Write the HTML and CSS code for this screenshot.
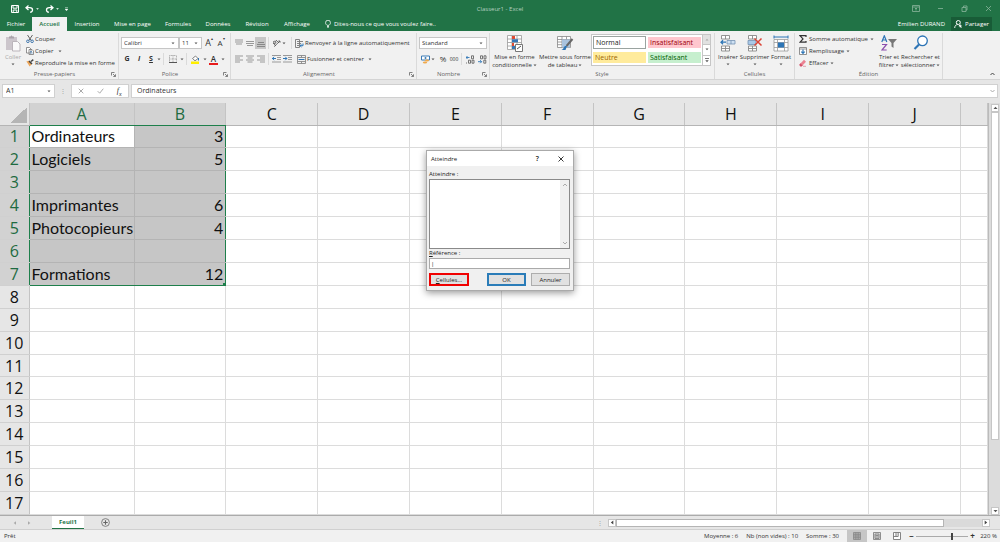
FILE: index.html
```html
<!DOCTYPE html>
<html lang="fr">
<head>
<meta charset="utf-8">
<title>Classeur1 - Excel</title>
<link rel="stylesheet" href="styles.css">
</head>
<body>
<svg class="defs" aria-hidden="true">
  <symbol id="down" viewBox="0 0 4 3"><path d="M0.5 0.5h3L2 2.3z" fill="#555"/></symbol>
  <symbol id="launch" viewBox="0 0 5 5"><path d="M.5 3.5v-3h3M2 2l2.3 2.3M4.5 2.3v2.2H2.3" fill="none" stroke="#666" stroke-width=".8"/></symbol>
</svg>

<header class="top">
  <div class="titlebar">
    <div class="quick">
      <button aria-label="Enregistrer"><svg width="8" height="8" viewBox="0 0 8 8"><path d="M.5.5h7v7h-7zM2 .5v2.7h4V.5M2.2 7.500V5h3.6v2.500" fill="none" stroke="#fff"/></svg></button>
      <button aria-label="Annuler la frappe"><svg width="9" height="8" viewBox="0 0 9 8"><path d="M3.500.5L1 2.700l2.500 2.200M1.200 2.700h3.600c3.600 0 3.600 4.500.2 4.500" fill="none" stroke="#fff" stroke-width="1.300"/></svg><svg width="3" height="2" viewBox="0 0 4 3"><path d="M0 .5h4L2 2.500z" fill="#fff"/></svg></button>
      <button aria-label="Répéter"><svg width="9" height="8" viewBox="0 0 9 8"><path d="M5.500.5L8 2.700 5.500 4.900M7.800 2.700H4.200c-3.600 0-3.600 4.500-.2 4.500" fill="none" stroke="#fff" stroke-width="1.300"/></svg><svg width="3" height="2" viewBox="0 0 4 3"><path d="M0 .5h4L2 2.500z" fill="#fff"/></svg></button>
      <button aria-label="Personnaliser"><svg width="3" height="4" viewBox="0 0 3 4"><path d="M0 .5h3M0 2h3L1.500 3.800z" fill="#fff" stroke="#fff" stroke-width=".4"/></svg></button>
    </div>
    <div class="doc-title">Classeur1 - Excel</div>
    <div class="window-buttons">
      <button aria-label="Options du ruban"><svg width="8" height="7" viewBox="0 0 8 7"><path d="M.5.5h7v6h-7zM.5 2h7M4 5.500V3M3 4l1-1 1 1" fill="none" stroke="#8ab59c" stroke-width=".8"/></svg></button>
      <button aria-label="Réduire"><svg width="7" height="7" viewBox="0 0 7 7"><path d="M1 3.500h5" stroke="#8ab59c" stroke-width=".8"/></svg></button>
      <button aria-label="Restaurer"><svg width="7" height="7" viewBox="0 0 7 7"><path d="M1 2.500h4v4H1zM2.500 2.500V1H6v4H5" fill="none" stroke="#8ab59c" stroke-width=".8"/></svg></button>
      <button aria-label="Fermer"><svg width="7" height="7" viewBox="0 0 7 7"><path d="M1 1l5 5M6 1L1 6" stroke="#8ab59c" stroke-width=".8"/></svg></button>
    </div>
  </div>
  <nav class="tabs">
    <button class="tab-file">Fichier</button>
    <button class="tab-active">Accueil</button>
    <button class="tab-insert">Insertion</button>
    <button class="tab-page">Mise en page</button>
    <button class="tab-formulas">Formules</button>
    <button class="tab-data">Données</button>
    <button class="tab-review">Révision</button>
    <button class="tab-view">Affichage</button>
    <button class="tell-me"><svg width="6" height="8" viewBox="0 0 6 8"><path d="M2 5.300C.5 4 .5 3 .6 2.600a2.400 2.400 0 0 1 4.800 0C5.500 3 5.500 4 4 5.300zM2 6.500h2M2.300 7.600h1.400" fill="none" stroke="#fff" stroke-width=".8"/></svg>Dites-nous ce que vous voulez faire..</button>
    <span class="user">Emilien DURAND</span>
    <button class="share"><svg width="8" height="8" viewBox="0 0 8 8"><circle cx="4.300" cy="2.500" r="2" fill="none" stroke="#fff"/><path d="M.7 8C.8 5.500 2 4.700 3.600 4.600M5 5l2.500 2.500M6.300 4.500v3M4.800 6h3" fill="none" stroke="#fff" stroke-width=".9"/></svg>Partager</button>
  </nav>
</header>

<section class="ribbon" aria-label="Ruban">
  <div class="group clipboard">
    <div class="content">
      <button class="big disabled"><svg width="16" height="17" viewBox="0 0 16 17"><path d="M1 2h11v13H1z" fill="#ccc6cc"/><path d="M4 3.500V1.500h1.500L6.500.3l1 1.200H9v2z" fill="#aaa3aa"/><path d="M7.500 6.500h5l2.500 2.500v7H7.500z" fill="#faf9fa" stroke="#bbb5bb"/></svg><span>Coller</span><svg class="car"><use href="#down"/></svg></button>
      <div class="stack">
        <button><svg width="8" height="8" viewBox="0 0 8 8"><path d="M1.500 0l3.700 5.500M6.500 0L2.800 5.500" stroke="#555" stroke-width=".9"/><circle cx="1.900" cy="6.300" r="1.300" fill="none" stroke="#3f76ad"/><circle cx="6.100" cy="6.300" r="1.300" fill="none" stroke="#3f76ad"/></svg>Couper</button>
        <button><svg width="8" height="8" viewBox="0 0 8 8"><path d="M.5.5h3l1.500 1.500v4H.5zM3 2.500h3l1.500 1.500v3.500H3z" fill="#fff" stroke="#777" stroke-width=".8"/><path d="M4 4.500h2M4 6h2.700" stroke="#4a83b8" stroke-width=".7"/></svg>Copier<svg class="car wide"><use href="#down"/></svg></button>
        <button><svg width="8" height="8" viewBox="0 0 8 8"><path d="M.3 2.500L3 1.800 6 5 3.500 7.600C2.500 5 1.500 4 .3 2.500z" fill="#eda65a"/><path d="M3 2l3 3M5 2.500L7.300.6" stroke="#444" stroke-width="1.500"/></svg>Reproduire la mise en forme</button>
      </div>
    </div>
    <div class="caption launched">Presse-papiers<svg class="launch"><use href="#launch"/></svg></div>
  </div>

  <div class="group font">
    <div class="content rows">
      <div class="row">
        <label class="combo font-name"><select aria-label="Police"><option>Calibri</option></select><svg class="car"><use href="#down"/></svg></label>
        <label class="combo font-size"><select aria-label="Taille"><option>11</option></select><svg class="car"><use href="#down"/></svg></label>
        <button class="tool12 grow" aria-label="Agrandir la police">A<sup>▴</sup></button>
        <button class="tool12 shrink" aria-label="Réduire la police">A<sup>▾</sup></button>
      </div>
      <div class="row">
        <button class="tool12"><b>G</b></button>
        <button class="tool12"><b><i>I</i></b></button>
        <button class="tool12"><b><u>S</u></b></button>
        <svg class="car"><use href="#down"/></svg><i class="sep"></i>
        <button class="tool8" aria-label="Bordures"><svg width="8" height="8" viewBox="0 0 8 8"><path d="M.5.5h7v7M.5.5v7M4 0v7M0 4h8" fill="none" stroke="#999" stroke-width=".7" stroke-dasharray="1 .5"/><path d="M0 7.500h8" stroke="#555"/></svg></button>
        <svg class="car"><use href="#down"/></svg><i class="sep"></i>
        <button class="tool8" aria-label="Remplissage de couleur"><svg width="9" height="9" viewBox="0 0 9 9"><path d="M1.500 3.500L4.500 1l2.500 2.500-3 2.300z" fill="#fff" stroke="#666" stroke-width=".8"/><path d="M7.500 3v2.500" stroke="#2d75b6"/><path d="M0 6.500h8v2.500H0z" fill="#ffee00"/></svg></button>
        <svg class="car"><use href="#down"/></svg>
        <button class="tool8 font-color" aria-label="Couleur de police">A</button>
        <svg class="car"><use href="#down"/></svg>
      </div>
    </div>
    <div class="caption launched">Police<svg class="launch"><use href="#launch"/></svg></div>
  </div>

  <div class="group align">
    <div class="content rows">
      <div class="row">
        <button class="tool12" aria-label="Haut"><svg width="8" height="8" viewBox="0 0 8 8"><path d="M0 1h8M0 3h8M1 5h6" stroke="#999"/></svg></button>
        <button class="tool12" aria-label="Milieu"><svg width="8" height="8" viewBox="0 0 8 8"><path d="M0 2.500h8M0 4.500h8M1 6.500h6" stroke="#999"/></svg></button>
        <button class="tool12 pressed" aria-label="Bas"><svg width="8" height="8" viewBox="0 0 8 8"><path d="M1 3.500h6M0 5.500h8M0 7.500h8" stroke="#888"/></svg></button>
        <i class="sep"></i>
        <button class="tool12" aria-label="Orientation"><svg width="9" height="8" viewBox="0 0 9 8"><path d="M1 4l3 3M1.500 2.500l2-.5.5 2-2 .5zM4 1l3 3M2 7.700L8 2M6.300 2H8v1.700" fill="none" stroke="#555" stroke-width=".8"/></svg></button>
        <svg class="car"><use href="#down"/></svg>
        <i class="sep space"></i>
        <button class="cmd"><svg width="9" height="9" viewBox="0 0 9 9"><path d="M.5.500h4v8h-4zM2 2.500h6M2 4.500h4M2 6.500h2" fill="none" stroke="#777" stroke-width=".9"/><path d="M8 4.500v2.200H5M6.500 5.300L5 6.700l1.500 1.300" fill="none" stroke="#2d75b6"/></svg>Renvoyer à la ligne automatiquement</button>
      </div>
      <div class="row">
        <button class="tool12" aria-label="Gauche"><svg width="8" height="8" viewBox="0 0 8 8"><path d="M0 1h8M0 3h5M0 5h8M0 7h5" stroke="#999"/></svg></button>
        <button class="tool12" aria-label="Centrer"><svg width="8" height="8" viewBox="0 0 8 8"><path d="M0 1h8M1.500 3h5M0 5h8M1.500 7h5" stroke="#999"/></svg></button>
        <button class="tool12" aria-label="Droite"><svg width="8" height="8" viewBox="0 0 8 8"><path d="M0 1h8M3 3h5M0 5h8M3 7h5" stroke="#999"/></svg></button>
        <i class="sep"></i>
        <button class="tool12" aria-label="Diminuer le retrait"><svg width="9" height="8" viewBox="0 0 9 8"><path d="M0 .5h9M5 2.500h4M5 4.500h4M0 7h9" stroke="#999"/><path d="M0 3.500h4M2 1.800L.5 3.500 2 5.200" fill="none" stroke="#2d75b6"/></svg></button>
        <button class="tool12" aria-label="Augmenter le retrait"><svg width="9" height="8" viewBox="0 0 9 8"><path d="M0 .5h9M5 2.500h4M5 4.500h4M0 7h9" stroke="#999"/><path d="M0 3.500h4M2.300 1.800L3.800 3.500 2.300 5.200" fill="none" stroke="#2d75b6"/></svg></button>
        <button class="cmd merge"><svg width="9" height="9" viewBox="0 0 9 9"><path d="M.5.500h8v8h-8zM.5 2.500h8M.5 6.500h8M4.500.5v2M4.500 6.500v2" fill="none" stroke="#888" stroke-width=".9"/><path d="M1.500 4.500h6" stroke="#2d75b6"/></svg>Fusionner et centrer<svg class="car wide"><use href="#down"/></svg></button>
      </div>
    </div>
    <div class="caption launched">Alignement<svg class="launch"><use href="#launch"/></svg></div>
  </div>

  <div class="group number">
    <div class="content rows">
      <div class="row">
        <label class="combo number-format"><select aria-label="Format de nombre"><option>Standard</option></select><svg class="car"><use href="#down"/></svg></label>
      </div>
      <div class="row">
        <button class="tool12" aria-label="Format comptable"><svg width="9" height="9" viewBox="0 0 9 9"><path d="M.5 1h8v4h-8z" fill="#fff" stroke="#3a7ab5"/><circle cx="4.500" cy="3" r="1" fill="#3a7ab5"/><ellipse cx="6" cy="5.500" rx="2" ry="1" fill="#f0a94b"/><ellipse cx="4" cy="7.500" rx="2.200" ry="1.100" fill="#f0a94b"/></svg></button>
        <svg class="car"><use href="#down"/></svg>
        <button class="tool12 pct">%</button>
        <button class="tool12 thousands">000</button>
        <i class="sep"></i>
        <button class="tool12" aria-label="Ajouter une décimale"><svg width="9" height="9" viewBox="0 0 9 9"><path d="M0 2.500h3.500M1.500 1L0 2.500 1.500 4" fill="none" stroke="#2d75b6" stroke-width=".9"/><path d="M5.500.8h2v3h-2zM2.500 5.200h2v3h-2zM6 5.200h2v3H6zM.5 7.500v1" fill="none" stroke="#555" stroke-width=".8"/></svg></button>
        <button class="tool12" aria-label="Réduire les décimales"><svg width="9" height="9" viewBox="0 0 9 9"><path d="M0 6.700h3.500M2.200 5.200l1.500 1.500-1.500 1.500" fill="none" stroke="#2d75b6" stroke-width=".9"/><path d="M2.500.8h2v3h-2zM6 .8h2v3H6zM5.800 5.200h2v3h-2z" fill="none" stroke="#555" stroke-width=".8"/></svg></button>
      </div>
    </div>
    <div class="caption launched">Nombre<svg class="launch"><use href="#launch"/></svg></div>
  </div>

  <div class="group style">
    <div class="content">
      <button class="big cond"><svg width="16" height="17" viewBox="0 0 16 17"><path d="M.5.500h14v14H.5zM.5 4h14M.5 7.500h14M.5 11h14M5 .5v14M10 .5v14" fill="#fff" stroke="#999" stroke-width=".8"/><path d="M5 1h3v3H5zM5 8h2v3H5z" fill="#df4b32"/><path d="M5 4.300h6v3H5zM5 11h4v3H5z" fill="#3777b5"/><path d="M8.500 9.500h7v7h-7z" fill="#fff" stroke="#777"/><path d="M10 14l4-3" stroke="#555"/></svg><span>Mise en forme<br>conditionnelle<svg class="car"><use href="#down"/></svg></span></button>
      <button class="big table"><svg width="17" height="17" viewBox="0 0 17 17"><path d="M.5 1.500h13v11H.5zM.5 4.500h13M.5 7h13M.5 9.700h13M5 1.500v11M9.500 1.500v11" fill="#fff" stroke="#888" stroke-width=".8"/><path d="M5 4.500h8v8H5z" fill="#a9c3de"/><path d="M15.500 4l-6 7" stroke="#666" stroke-width="2"/><path d="M10 11l-1.500 4H4.500c2-.5 2-3 3.500-4z" fill="#2d75b6"/></svg><span>Mettre sous forme<br>de tableau<svg class="car"><use href="#down"/></svg></span></button>
      <div class="gallery">
        <div class="swatches">
          <button class="normal">Normal</button><button class="bad">Insatisfaisant</button>
          <button class="neutral">Neutre</button><button class="good">Satisfaisant</button>
        </div>
        <div class="gallery-scroll">
          <button class="off" aria-label="Monter"><svg width="4" height="3" viewBox="0 0 4 3"><path d="M.5 2.500h3L2 .7z" fill="#aaa"/></svg></button>
          <button aria-label="Descendre"><svg class="car"><use href="#down"/></svg></button>
          <button aria-label="Autres"><svg width="4" height="5" viewBox="0 0 4 5"><path d="M0 .5h4" stroke="#555" stroke-width=".8"/><path d="M.3 2.200h3.400L2 4.200z" fill="#555"/></svg></button>
        </div>
      </div>
    </div>
    <div class="caption">Style</div>
  </div>

  <div class="group cells">
    <div class="content">
      <button class="big"><svg width="16" height="17" viewBox="0 0 16 17"><path d="M1.500.500h8v3.500h-8zM5.500.5V4M1.500 11h8v5h-8zM1.500 13.500h8M5.500 11v5" fill="#fff" stroke="#888" stroke-width=".9"/><path d="M7 5.500h8v3.500H7zM11 5.500V9" fill="#cfe1f3" stroke="#7392b3" stroke-width=".8"/><path d="M1 7.200h5M3 5.200l-2 2 2 2" fill="none" stroke="#2d75b6" stroke-width="1.300"/></svg><span>Insérer</span><svg class="car"><use href="#down"/></svg></button>
      <button class="big"><svg width="16" height="17" viewBox="0 0 16 17"><path d="M1.500.500h8v3.500h-8zM5.500.5V4M1.500 11h8v5h-8zM1.500 13.500h8M5.500 11v5" fill="#fff" stroke="#888" stroke-width=".9"/><path d="M1 5.500h8v4H1z" fill="#a9c9e8" stroke="#7392b3" stroke-width=".8"/><path d="M7.500 3.500l7 7M14.500 3.500l-7 7" stroke="#db4537" stroke-width="1.500"/></svg><span>Supprimer</span><svg class="car"><use href="#down"/></svg></button>
      <button class="big"><svg width="16" height="17" viewBox="0 0 16 17"><path d="M1 .5v3M15 .5v3M1 2h14" stroke="#2d75b6"/><path d="M1 4.500h14v11.500H1zM1 7.500h14M1 12.500h14M4.500 4.500V16M11.500 4.500V16" fill="#fff" stroke="#999" stroke-width=".8"/><path d="M5 7.500h6v5H5z" fill="#2d75b6"/></svg><span>Format</span><svg class="car"><use href="#down"/></svg></button>
    </div>
    <div class="caption">Cellules</div>
  </div>

  <div class="group edit">
    <div class="content">
      <div class="stack">
        <button><svg width="8" height="8" viewBox="0 0 8 8"><path d="M7 2V.7H1l3 3.200-3 3.300h6V6" fill="none" stroke="#333" stroke-width="1.200"/></svg>Somme automatique<svg class="car"><use href="#down"/></svg></button>
        <button><svg width="8" height="8" viewBox="0 0 8 8"><path d="M.5.500h7v7h-7zM.5 2h7" fill="#fff" stroke="#777" stroke-width=".8"/><path d="M4 2.500v4M2.300 4.700L4 6.500l1.700-1.800" fill="none" stroke="#2d75b6" stroke-width="1.200"/></svg>Remplissage<svg class="car"><use href="#down"/></svg></button>
        <button><svg width="8" height="8" viewBox="0 0 8 8"><path d="M1.500 4.500L5 .8l2 2-3.500 3.700z" fill="#ec8292"/><path d="M1.500 4.500l2 2-.8.700H1.300L.5 5.700zM4 7.300h3" fill="#d74f68" stroke="#d74f68" stroke-width=".5"/></svg>Effacer<svg class="car"><use href="#down"/></svg></button>
      </div>
      <button class="big sort"><svg width="16" height="17" viewBox="0 0 16 17"><path d="M.8 7L3.300.8 5.800 7M1.700 5h3.200" fill="none" stroke="#2d75b6" stroke-width="1.200"/><path d="M1 9.500h4.500L1 15h4.700" fill="none" stroke="#8b4fae" stroke-width="1.200"/><path d="M7 4h9l-3.500 4v5l-2-1.500V8z" fill="#777"/></svg><span>Trier et<br>filtrer<svg class="car"><use href="#down"/></svg></span></button>
      <button class="big find"><svg width="16" height="17" viewBox="0 0 16 17"><circle cx="9.500" cy="5.800" r="4.800" fill="#fff" stroke="#2d75b6" stroke-width="1.300"/><path d="M6 9.500L1.500 14" stroke="#2d75b6" stroke-width="2.200"/></svg><span>Rechercher et<br>sélectionner<svg class="car"><use href="#down"/></svg></span></button>
    </div>
    <div class="caption">Édition</div>
  </div>
  <button class="collapse" aria-label="Réduire le ruban"><svg width="5" height="4" viewBox="0 0 5 4"><path d="M.5 3l2-2 2 2" fill="none" stroke="#444"/></svg></button>
</section>

<div class="formula-bar">
  <label class="name-box"><input aria-label="Zone Nom" value="A1"><svg class="car"><use href="#down"/></svg></label>
  <span class="grip">⋮</span>
  <div class="formula-buttons">
    <button aria-label="Annuler la saisie"><svg width="6" height="6" viewBox="0 0 6 6"><path d="M.7.700l4.600 4.600M5.300.700L.7 5.300" stroke="#aaa"/></svg></button>
    <button aria-label="Entrer"><svg width="7" height="6" viewBox="0 0 7 6"><path d="M.7 3.200l2 2L6.300.7" fill="none" stroke="#aaa"/></svg></button>
    <button class="fx"><i>f<sub>x</sub></i></button>
  </div>
  <label class="formula"><input aria-label="Barre de formule" value="Ordinateurs"><svg width="5" height="4" viewBox="0 0 5 4"><path d="M.5 1l2 2 2-2" fill="none" stroke="#aaa"/></svg></label>
</div>

<main class="sheet">
  <div class="grid-area">
  <table class="grid">
    <colgroup><col class="c-head"><col class="c-a"><col><col><col><col><col><col><col><col><col><col class="c-last"></colgroup>
    <thead><tr><th class="corner"></th><th class="on">A</th><th class="on">B</th><th>C</th><th>D</th><th>E</th><th>F</th><th>G</th><th>H</th><th>I</th><th>J</th><th></th></tr></thead>
    <tbody>
      <tr class="first sel"><th>1</th><td class="a active">Ordinateurs</td><td class="b">3</td><td></td><td></td><td></td><td></td><td></td><td></td><td></td><td></td><td></td></tr>
      <tr class="sel"><th>2</th><td class="a">Logiciels</td><td class="b">5</td><td></td><td></td><td></td><td></td><td></td><td></td><td></td><td></td><td></td></tr>
      <tr class="sel"><th>3</th><td class="a"></td><td class="b"></td><td></td><td></td><td></td><td></td><td></td><td></td><td></td><td></td><td></td></tr>
      <tr class="sel"><th>4</th><td class="a">Imprimantes</td><td class="b">6</td><td></td><td></td><td></td><td></td><td></td><td></td><td></td><td></td><td></td></tr>
      <tr class="sel"><th>5</th><td class="a">Photocopieurs</td><td class="b">4</td><td></td><td></td><td></td><td></td><td></td><td></td><td></td><td></td><td></td></tr>
      <tr class="sel"><th>6</th><td class="a"></td><td class="b"></td><td></td><td></td><td></td><td></td><td></td><td></td><td></td><td></td><td></td></tr>
      <tr class="sel last"><th>7</th><td class="a">Formations</td><td class="b">12</td><td></td><td></td><td></td><td></td><td></td><td></td><td></td><td></td><td></td></tr>
      <tr><th>8</th><td></td><td></td><td></td><td></td><td></td><td></td><td></td><td></td><td></td><td></td><td></td></tr>
      <tr><th>9</th><td></td><td></td><td></td><td></td><td></td><td></td><td></td><td></td><td></td><td></td><td></td></tr>
      <tr><th>10</th><td></td><td></td><td></td><td></td><td></td><td></td><td></td><td></td><td></td><td></td><td></td></tr>
      <tr><th>11</th><td></td><td></td><td></td><td></td><td></td><td></td><td></td><td></td><td></td><td></td><td></td></tr>
      <tr><th>12</th><td></td><td></td><td></td><td></td><td></td><td></td><td></td><td></td><td></td><td></td><td></td></tr>
      <tr><th>13</th><td></td><td></td><td></td><td></td><td></td><td></td><td></td><td></td><td></td><td></td><td></td></tr>
      <tr><th>14</th><td></td><td></td><td></td><td></td><td></td><td></td><td></td><td></td><td></td><td></td><td></td></tr>
      <tr><th>15</th><td></td><td></td><td></td><td></td><td></td><td></td><td></td><td></td><td></td><td></td><td></td></tr>
      <tr><th>16</th><td></td><td></td><td></td><td></td><td></td><td></td><td></td><td></td><td></td><td></td><td></td></tr>
      <tr><th>17</th><td></td><td></td><td></td><td></td><td></td><td></td><td></td><td></td><td></td><td></td><td></td></tr>
    </tbody>
  </table>
  </div>
  <div class="vscroll">
    <button aria-label="Vers le haut"><svg width="5" height="4" viewBox="0 0 5 4"><path d="M.5 3h4l-2-2.300z" fill="#555"/></svg></button>
    <div class="thumb"></div>
    <button aria-label="Vers le bas"><svg width="5" height="4" viewBox="0 0 5 4"><path d="M.5 1h4l-2 2.300z" fill="#555"/></svg></button>
  </div>

  <form class="dialog" role="dialog" aria-labelledby="dlg-title">
    <div class="dialog-title"><span id="dlg-title">Atteindre</span><button type="button" class="help">?</button><button type="button" class="close" aria-label="Fermer"><svg width="6" height="6" viewBox="0 0 6 6"><path d="M.5.500l5 5M5.500.500l-5 5" stroke="#222" stroke-width=".9"/></svg></button></div>
    <div class="dialog-body">
      <label for="places">Atteindre :</label>
      <div class="listbox"><select id="places" size="4"></select><div class="list-scroll"><svg width="6" height="4" viewBox="0 0 6 4"><path d="M1 3l2-2 2 2" fill="none" stroke="#999" stroke-width=".8"/></svg><svg width="6" height="4" viewBox="0 0 6 4"><path d="M1 1l2 2 2-2" fill="none" stroke="#999" stroke-width=".8"/></svg></div></div>
      <label for="ref"><u>R</u>éférence :</label>
      <input id="ref" value="|">
      <div class="actions"><button type="button" class="cellules"><u>C</u>ellules...</button><button type="button" class="ok">OK</button><button type="button" class="cancel">Annuler</button></div>
    </div>
  </form>
</main>

<div class="sheet-tabs">
  <button class="nav" aria-label="Feuille précédente"><svg width="3" height="4" viewBox="0 0 3 4"><path d="M3 .3v3.400L.7 2z" fill="#aaa"/></svg></button>
  <button class="nav" aria-label="Feuille suivante"><svg width="3" height="4" viewBox="0 0 3 4"><path d="M0 .3v3.400L2.300 2z" fill="#aaa"/></svg></button>
  <button class="sheet-tab">Feuil1</button>
  <button class="add" aria-label="Nouvelle feuille"><svg width="9" height="9" viewBox="0 0 9 9"><circle cx="4.500" cy="4.500" r="3.900" fill="none" stroke="#777" stroke-width=".9"/><path d="M4.500 2.300v4.400M2.300 4.500h4.400" stroke="#666" stroke-width="1.100"/></svg></button>
  <span class="grip">⋮</span>
  <div class="hscroll">
    <button aria-label="Vers la gauche"><svg width="4" height="5" viewBox="0 0 4 5"><path d="M3.300.5v4L.8 2.500z" fill="#444"/></svg></button>
    <div class="thumb"></div>
    <button aria-label="Vers la droite"><svg width="4" height="5" viewBox="0 0 4 5"><path d="M.7.500v4l2.500-2z" fill="#444"/></svg></button>
  </div>
</div>

<footer class="status">
  <span class="ready">Prêt</span>
  <span class="stat">Moyenne : 6</span><span class="stat">Nb (non vides) : 10</span><span class="stat">Somme : 30</span>
  <div class="views">
    <button class="current" aria-label="Normal"><svg width="8" height="8" viewBox="0 0 8 8"><path d="M.5.500h7v7h-7zM.5 2.800h7M.5 5.200h7M2.800.5v7M5.200.5v7" fill="#aaa" stroke="#888" stroke-width=".8"/></svg></button>
    <button aria-label="Mise en page"><svg width="8" height="8" viewBox="0 0 8 8"><path d="M.5.500h7v7h-7zM2 2h4v4.500H2zM2.500 3.500h3M2.500 5h3" fill="#ddd" stroke="#777" stroke-width=".8"/></svg></button>
    <button aria-label="Sauts de page"><svg width="8" height="8" viewBox="0 0 8 8"><path d="M.5.500h7v7h-7zM.5 4.500h4.700v-4M3 .5v4" fill="#fff" stroke="#777" stroke-width=".9"/></svg></button>
  </div>
  <button class="zoom-step">−</button>
  <input class="zoom" type="range" aria-label="Zoom" min="0" max="100" value="70">
  <button class="zoom-step">+</button>
  <span class="zoom-value">220 %</span>
</footer>
</body>
</html>
```
FILE: styles.css
```css
* { box-sizing: border-box; }

body {
  margin: 0;
  height: 100vh;
  display: flex;
  flex-direction: column;
  overflow: hidden;
  background: #e6e6e6;
  color: #333;
  font: 6px/8px "Open Sans", "Noto Sans", sans-serif;
}

button, input, select {
  margin: 0;
  padding: 0;
  border: 0;
  border-radius: 0;
  background: none;
  color: inherit;
  font: inherit;
  outline: 0;
  appearance: none;
  white-space: nowrap;
}

button { display: flex; align-items: center; justify-content: center; }
svg { flex: none; display: block; }
.defs { position: absolute; width: 0; height: 0; }
.car { width: 4px; height: 3px; }
.wide { margin-left: 3px; }

/* Title bar and ribbon tabs */
.top { background: #217346; color: #fff; }
.titlebar { display: grid; grid-template-columns: 1fr auto 1fr; align-items: center; height: 17px; }
.quick { display: flex; align-items: center; gap: 6px; padding-left: 11px; }
.quick button { gap: 2px; }
.doc-title { color: #b5d0c0; }
.window-buttons { display: flex; justify-content: flex-end; gap: 17px; padding-right: 8px; }
.tabs { display: flex; align-items: stretch; height: 14px; }
.tabs button { height: 14px; }
.tab-file { width: 32px; }
.tab-active { width: 35px; background: #f1f1f1; color: #217346; font-weight: 600; }
.tab-insert { width: 40px; }
.tab-page { width: 51px; }
.tab-formulas { width: 40px; }
.tab-data { width: 40px; }
.tab-review { width: 38px; }
.tab-view { width: 42px; }
.tell-me { gap: 3px; margin-left: 7px; }
.user { margin-left: auto; margin-right: 6px; line-height: 14px; }
.share { gap: 3px; width: 41px; margin-right: 8px; background: #185c37; }

/* Ribbon */
.ribbon { display: flex; flex: none; height: 49px; background: #f1f1f1; border-bottom: 1px solid #d4d4d4; }
.group { display: flex; flex-direction: column; border-right: 1px solid #dadada; margin: 2px 0 0; }
.clipboard { width: 119px; }
.font { width: 112px; }
.align { width: 186px; }
.number { width: 73px; }
.style { width: 225px; }
.cells { width: 80px; }
.edit { width: 148px; }
.content { display: flex; flex: none; height: 36px; }
.rows { flex-direction: column; padding: 2px 0 2px 2px; }
.row { display: flex; align-items: center; height: 16px; }
.caption { display: flex; align-items: center; justify-content: center; position: relative; height: 10px; color: #666; }
.launched { padding-right: 9px; }
.launch { position: absolute; right: 2px; top: 3px; width: 5px; height: 5px; }
.stack { display: flex; flex-direction: column; }
.stack button { justify-content: flex-start; gap: 2px; height: 12px; }
.clipboard .stack button { gap: 1px; }
.clipboard .wide { margin-left: 4px; }
.big { flex-direction: column; justify-content: flex-start; padding-top: 2px; text-align: center; }
.big span { margin-top: 1px; }
.big > .car { margin-top: 2px; }
.big span .car { display: inline-block; vertical-align: middle; margin-left: 1px; }
.clipboard .big { width: 26px; }
.disabled { color: #aaa; }
.tool12 { width: 12px; height: 12px; }
.tool8 { width: 9px; height: 12px; margin-left: 2px; margin-right: 3px; }
.tool12 b { font-size: 7px; color: #333; }
.align .tool12 { width: 11px; }
.pressed { background: #c6c6c6; }
.sep { width: 1px; height: 12px; margin: 0 2px; background: #dadada; }
.sep.space { margin: 0 3px 0 5px; }
.combo { display: flex; align-items: center; height: 12px; padding: 0 3px 0 2px; background: #fff; border: 1px solid #c6c6c6; }
.combo select { flex: 1; min-width: 0; }
.font-name { width: 58px; }
.font-size { width: 23px; }
.grow { margin-left: 1px; font-size: 9px; }
.shrink { font-size: 8px; }
.tool12 sup { font-size: 4px; line-height: 4px; align-self: flex-start; }
.font-color { height: 10px; margin-top: 1px; border-bottom: 2px solid #e81c1c; font-size: 8px; font-weight: 600; }
.cmd { gap: 1px; }
.merge { margin-left: 4px; }
.number-format { width: 68px; }
.pct { margin-left: 2px; font-size: 8px; }
.thousands { width: 10px; font-size: 5px; }
.cond { width: 49px; }
.table { width: 52px; }
.gallery { display: flex; align-self: flex-start; margin-top: 1px; border: 1px solid #c6c6c6; background: #fff; height: 32px; }
.swatches { display: grid; grid-template-columns: 53px 53px; grid-template-rows: 13px 13px; gap: 2px; padding: 1px; }
.swatches button { justify-content: flex-start; padding-left: 2px; font-size: 7px; }
.swatches .normal { border: 1px solid #9aa3a0; color: #222; }
.swatches .bad { background: #ffc7ce; color: #9c0006; }
.swatches .neutral { background: #ffeb9c; color: #9c6500; }
.swatches .good { background: #c6efce; color: #006100; }
.swatches .bad, .swatches .neutral, .swatches .good { margin: 1px 0; }
.gallery-scroll { display: flex; flex-direction: column; width: 8px; border-left: 1px solid #c6c6c6; }
.gallery-scroll button { flex: 1; border-bottom: 1px solid #c6c6c6; }
.gallery-scroll button:last-child { border-bottom: 0; }
.gallery-scroll .off { background: #e1e1e1; }
.cells .content { justify-content: center; }
.cells .big { width: 27px; }
.edit .content { padding-left: 4px; }
.edit .stack { width: 78px; }
.sort { width: 24px; }
.find { width: 39px; }
.collapse { align-self: flex-end; margin: 0 5px 3px auto; }

/* Formula bar */
.formula-bar { display: flex; flex: none; align-items: center; height: 23px; padding: 0 2px 1px 2px; }
.name-box, .formula, .formula-buttons { display: flex; align-items: center; height: 14px; background: #fff; border: 1px solid #d0d0d0; }
.name-box { width: 53px; padding: 0 3px; }
.name-box input, .formula input { flex: 1; min-width: 0; font-size: 7px; }
.grip { width: 16px; text-align: center; color: #999; }
.formula-buttons { width: 58px; justify-content: space-around; }
.fx { font: 8px/10px "Liberation Serif", serif; color: #333; }
.fx sub { font-size: 6px; line-height: 6px; }
.formula { flex: 1; margin-left: 2px; padding: 0 2px 0 5px; }

/* Worksheet */
.sheet { position: relative; display: flex; flex: 1; min-height: 0; }
.grid-area { flex: 1; background: #fff; border-right: 1px solid #bbb; }
.grid { width: 100%; height: 100%; table-layout: fixed; border-collapse: collapse; font-size: 16px; line-height: 18px; }
.c-head { width: 29px; }
.c-a { width: 105px; }
.c-last { width: 27px; }
.grid th, .grid td { padding: 0; font-weight: 400; }
.grid th { background: #e6e6e6; color: #111; border-right: 1px solid #c4c4c4; }
.grid thead th { height: 22px; border-bottom: 1px solid #b5b5b5; }
.grid thead .corner { background: linear-gradient(135deg, #e6e6e6 50%, #b5b5b5 50%) no-repeat 11px 4px / 16px 16px #e6e6e6; }
.grid tbody th { border-bottom: 1px solid #d0d0d0; }
.grid .on, .grid .sel th { background: #d2d2d2; color: #1e6b41; }
.grid td { border: 1px solid #dcdcdc; color: #111; font-family: Lato, "Noto Sans", sans-serif; }
.grid .sel .a, .grid .sel .b { background: #c6c6c6; border-color: #b4b4b4; }
.grid .sel .a { padding-left: 2px; border-left-color: #1e7f4b; }
.grid .sel .b { padding-right: 2px; text-align: right; border-right-color: #1e7f4b; }
.grid .sel .active { background: #fff; }
.grid .first .a, .grid .first .b { border-top-color: #1e7f4b; }
.grid .last .a, .grid .last .b { border-bottom-color: #1e7f4b; }
.grid thead .on { border-bottom-color: #1e7f4b; }
.grid .sel th { border-right-color: #1e7f4b; }
.grid .last .b { background: linear-gradient(#1e7f4b, #1e7f4b) no-repeat right bottom / 2px 2px #c6c6c6; }
.vscroll { display: flex; flex-direction: column; width: 11px; padding: 1px 1px 0 2px; background: #dcdcdc; }
.vscroll button { height: 8px; background: #fff; border: 1px solid #c6c6c6; }
.vscroll .thumb { height: 328px; background: #fff; border: 1px solid #c6c6c6; }
.vscroll button:last-child { margin-top: auto; }

/* Go-to dialog */
.dialog {
  position: absolute;
  left: 426px;
  top: 47px;
  width: 148px;
  background: #f0f0f0;
  border: 1px solid #aaa;
  box-shadow: 0 2px 7px rgba(0, 0, 0, .4);
  color: #222;
}
.dialog-title { display: flex; align-items: center; height: 15px; padding: 0 9px 0 4px; background: #fff; }
.dialog-title span { flex: 1; }
.help { margin-right: 19px; font-size: 7px; font-weight: 600; }
.dialog-body { display: flex; flex-direction: column; padding: 4px 3px 4px 2px; }
.dialog-body label { height: 9px; }
.listbox { display: flex; height: 70px; background: #fff; border: 1px solid #8a8a8a; }
.listbox select { flex: 1; min-width: 0; height: 68px; }
.list-scroll { display: flex; flex-direction: column; justify-content: space-between; align-items: center; width: 9px; padding: 3px 0; background: #f0f0f0; }
#ref { height: 11px; padding-left: 1px; background: #fff; border: 1px solid #aaa; }
.actions { display: flex; gap: 5px; margin-top: 4px; }
.actions button { height: 13px; width: 39px; background: #e1e1e1; border: 1px solid #adadad; }
.actions .cellules { width: 40px; border: 2px solid #f00000; margin-right: auto; }
.actions .ok { border: 2px solid #2a7cb8; }

/* Sheet tabs, scroll bar and status bar */
.sheet-tabs { display: flex; flex: none; align-items: center; height: 15px; border-top: 1px solid #ababab; border-bottom: 1px solid #d0d0d0; padding-right: 10px; }
.nav { width: 3px; margin-left: 13px; }
.nav + .nav { margin-left: 12px; }
.sheet-tab { width: 32px; height: 13px; margin-left: 21px; background: #fff; color: #217346; font-weight: 700; border-bottom: 1px solid #217346; }
.add { margin-left: 17px; }
.sheet-tabs .grip { margin-left: auto; }
.hscroll { display: flex; width: 382px; height: 8px; background: #dadada; }
.hscroll button { width: 8px; background: #fff; border: 1px solid #c6c6c6; }
.hscroll .thumb { width: 328px; background: #fff; border: 1px solid #b5b5b5; }
.hscroll button:last-child { margin-left: auto; }
.status { display: flex; flex: none; align-items: center; height: 12px; padding: 0 3px 0 4px; background: #f1f1f1; }
.ready { margin-right: auto; }
.stat { margin-right: 8px; }
.views { display: flex; }
.views button { width: 20px; height: 12px; }
.views .current { background: #c6c6c6; }
.zoom-step { width: 5px; margin: 0 2px; font-size: 8px; font-weight: 700; }
.zoom { width: 52px; height: 8px; background: linear-gradient(#aaa, #aaa) no-repeat center / 100% 1px; }
.zoom::-webkit-slider-thumb { appearance: none; width: 2px; height: 7px; background: #444; }
.zoom-value { width: 20px; text-align: right; white-space: nowrap; }
```
